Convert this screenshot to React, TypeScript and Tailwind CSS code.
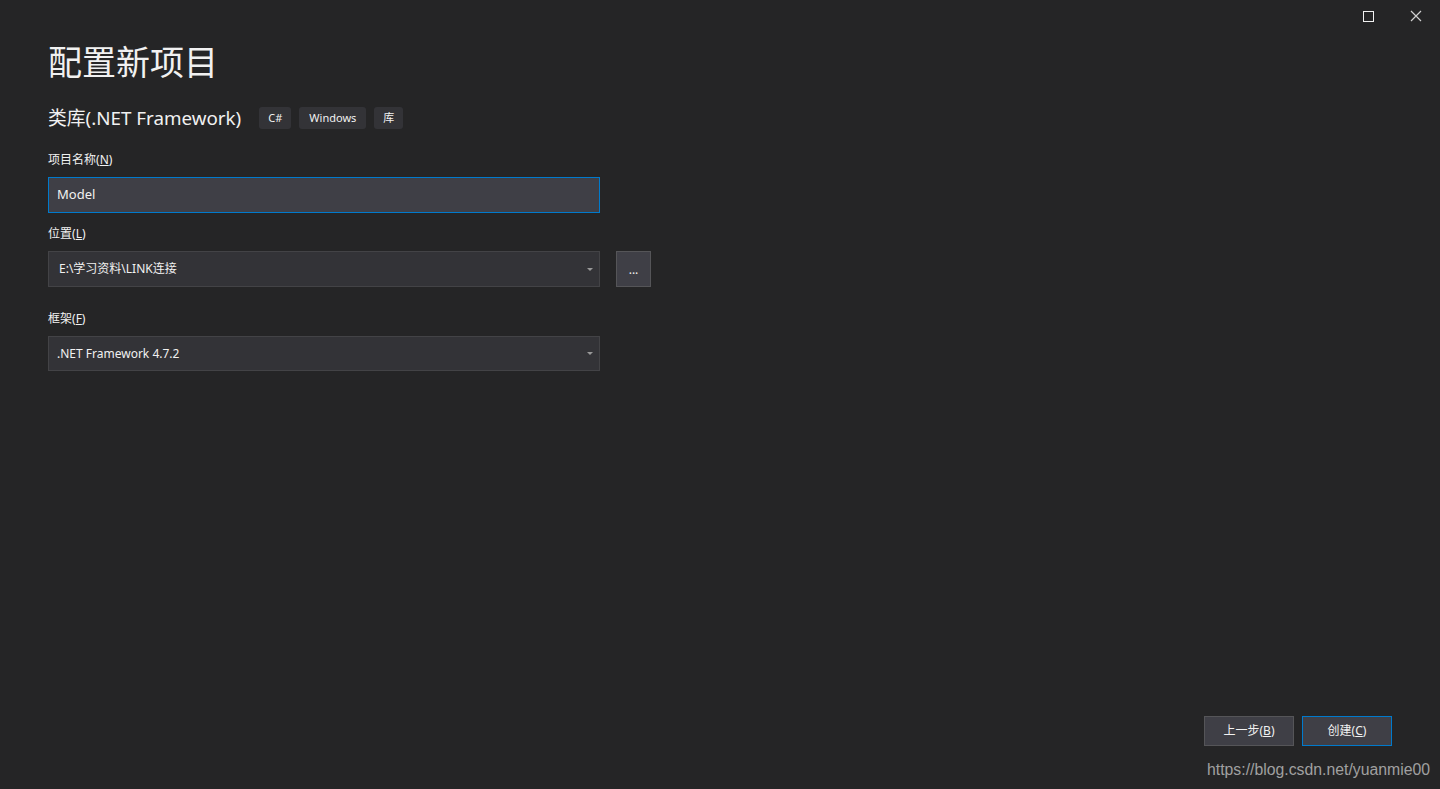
const font = { fontFamily: '"Noto Sans", "Noto Sans CJK SC", sans-serif' };

const Tag = ({ children, wide }: { children: React.ReactNode; wide?: boolean }) => (
  <span
    className={`h-[22px] flex items-center rounded-[3px] bg-[#333337] text-[11px] text-[#f1f1f1] ${
      wide ? "px-[10px]" : "px-[9px]"
    }`}
  >
    {children}
  </span>
);

const Label = ({ text, accel }: { text: string; accel: string }) => (
  <div className="text-[12px] leading-[16px] text-[#f1f1f1]">
    {text}(<span className="underline">{accel}</span>)
  </div>
);

const Caret = () => (
  <svg width="6" height="3" viewBox="0 0 6 3" className="mr-[4px]">
    <path d="M0 0h6L3 3z" fill="#999999" />
  </svg>
);

export default function App() {
  return (
    <div
      className="relative w-[1440px] h-[789px] bg-[#252526] text-[#f1f1f1] overflow-hidden"
      style={font}
    >
      {/* window controls */}
      <div className="absolute top-[10px] right-[18px] flex items-center gap-[36px]">
        <div className="w-[11px] h-[11px] border border-[#f1f1f1]" />
        <svg width="12" height="12" viewBox="0 0 12 12">
          <path d="M1 1l10 10M11 1L1 11" stroke="#d0d0d0" strokeWidth="1.2" />
        </svg>
      </div>

      <div className="pl-[48px] pt-[37px] w-[700px]">
        <h1 className="text-[34px] leading-[50px] text-[#f1f1f1] font-normal">配置新项目</h1>

        <div className="mt-[18px] flex items-center gap-[8px]">
          <span className="text-[18.8px] leading-[26px] mr-[10px]">类库(.NET Framework)</span>
          <Tag>C#</Tag>
          <Tag wide>Windows</Tag>
          <Tag>库</Tag>
        </div>

        <div className="mt-[21px]">
          <Label text="项目名称" accel="N" />
          <div className="mt-[9px] w-[552px] h-[36px] border border-[#007acc] bg-[#3f3f46] flex items-center px-[8px] text-[13px]">
            Model
          </div>
        </div>

        <div className="mt-[13px]">
          <Label text="位置" accel="L" />
          <div className="mt-[9px] flex items-center gap-[16px]">
            <div className="w-[552px] h-[36px] border border-[#434346] bg-[#333337] flex items-center justify-between pl-[10px] pr-[2px] text-[12px]">
              <span>E:\学习资料\LINK连接</span>
              <Caret />
            </div>
            <div className="w-[35px] h-[36px] border border-[#555558] bg-[#3f3f46] flex items-center justify-center text-[12px] pt-[2px]">
              ...
            </div>
          </div>
        </div>

        <div className="mt-[24px]">
          <Label text="框架" accel="F" />
          <div className="mt-[9px] w-[552px] h-[35px] border border-[#434346] bg-[#333337] flex items-center justify-between pl-[8px] pr-[2px] text-[12px]">
            <span>.NET Framework 4.7.2</span>
            <Caret />
          </div>
        </div>
      </div>

      {/* footer buttons */}
      <div className="absolute right-[48px] top-[716px] flex gap-[8px]">
        <button className="w-[90px] h-[30px] border border-[#555558] bg-[#3f3f46] text-[12px] text-[#f1f1f1]">
          上一步(<span className="underline">B</span>)
        </button>
        <button className="w-[90px] h-[30px] border border-[#007acc] bg-[#3f3f46] text-[12px] text-[#f1f1f1]">
          创建(<span className="underline">C</span>)
        </button>
      </div>

      <div
        className="absolute left-[1207px] top-[758px] text-[15.8px] text-[#a0a0a0]"
        style={{ fontFamily: '"Liberation Sans", Arial, sans-serif' }}
      >
        https://blog.csdn.net/yuanmie00
      </div>
    </div>
  );
}
